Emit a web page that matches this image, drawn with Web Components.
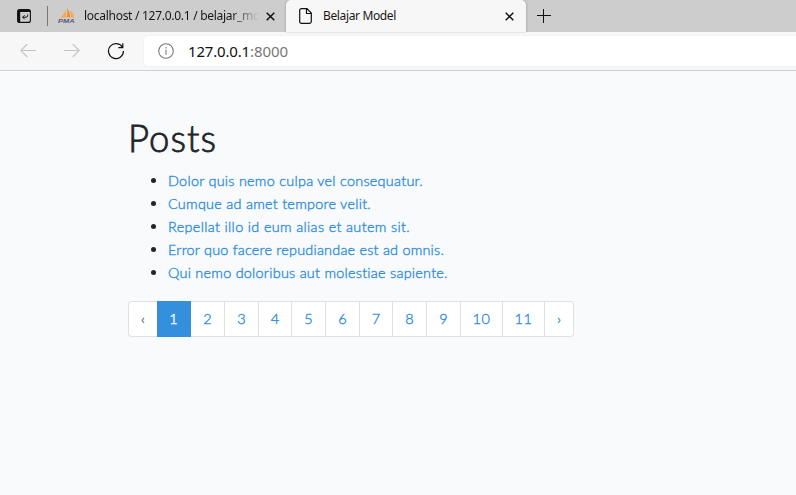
<!DOCTYPE html>
<html lang="en">
<head>
<meta charset="utf-8">
<title>Belajar Model</title>
<style>
html,body{margin:0;height:100%;overflow:hidden}
</style>
</head>
<body>
<browser-window></browser-window>
<script>
const define = (name, html) => customElements.define(name, class extends HTMLElement {
  connectedCallback() {
    if (!this.shadowRoot) {
      const t = document.createElement('template');
      t.innerHTML = html;
      this.attachShadow({ mode: 'open' }).append(t.content.cloneNode(true));
    }
  }
});

// Text tracked so that its line has the length given in the "length" attribute.
customElements.define('tracked-text', class extends HTMLElement {
  connectedCallback() {
    if (this.shadowRoot) return;
    this.attachShadow({ mode: 'open' }).innerHTML =
      '<style>:host{display:inline-block;white-space:nowrap}span{display:inline-block}</style><span><slot></slot></span>';
    const span = this.shadowRoot.querySelector('span');
    const target = +this.getAttribute('length');
    const extra = (target - span.getBoundingClientRect().width) / this.textContent.length;
    span.style.letterSpacing = extra.toFixed(3) + 'px';
  }
});

define('close-icon', `<style>:host{display:block;width:9px;height:9px}svg{display:block}</style>
<svg width="9" height="9" viewBox="0 0 9 9"><path d="M.7.7l7.6 7.6M8.3.7L.7 8.3" stroke="#111" stroke-width="1.5"/></svg>`);

define('tab-actions', `<style>:host{display:flex;width:48px;height:32px;box-sizing:border-box;align-items:center;padding-left:17px}
i{width:1px;height:20px;background:#777;margin-left:16px}</style>
<svg width="14" height="14" viewBox="0 0 14 14"><rect x=".6" y=".6" width="12.800" height="12.800" rx="2" fill="none" stroke="#111" stroke-width="1.100"/><path d="M1 1h12v2H3.200V13H1z" fill="#111"/><path d="M10.600 5.500v1.200q0 1.500-1.500 1.500H5.800M7.600 6.200L5.600 8.200l2 2" fill="none" stroke="#111"/></svg><i></i>`);

define('pma-logo', `<style>:host{display:block;width:18px;height:16px}svg{display:block}text{font:italic bold 6.2px "Liberation Sans",sans-serif}</style>
<svg width="18" height="16" viewBox="0 0 18 16"><path d="M8 .5C7.8 4 5 7.500 2 9.800q3-.8 6-.4z" fill="#f9a64a"/><path d="M9 .2q3.500 4.500 3 9.200-1.700-.7-3.200-.2Q10 5 9 .2z" fill="#f58b1c"/><path d="M12 2.500q4 3 4.200 7.500-1.800-.8-3.600-.6Q13.200 6 12 2.500z" fill="#f9a64a"/><text x="0" y="15.300" textLength="16.500" lengthAdjust="spacingAndGlyphs" fill="#555879">PMA</text></svg>`);

define('browser-tab', `<style>
:host{display:flex;position:relative;box-sizing:border-box;align-items:center;height:32px;font:12px/16px "Noto Sans","Open Sans",sans-serif;color:#171717}
:host([active]){background:#f7f7f7;border-radius:5px 5px 0 0;box-shadow:1px 0 2px #0002,-1px 0 2px #0002}
.title{overflow:hidden;white-space:nowrap;flex:none}
:host(:not([active])) .title{-webkit-mask-image:linear-gradient(90deg,#000 84%,transparent)}
</style><slot name="icon"></slot><div class="title" style="width:var(--title-width);margin-left:var(--title-gap)"><slot></slot></div><close-icon style="margin-left:var(--close-gap)"></close-icon>`);

define('tab-strip', `<style>:host{display:flex;height:32px;background:#cdcdcd}
.a{width:238px;padding-left:10px;--title-width:175px;--title-gap:8px;--close-gap:7px}
.b{width:240px;padding-left:13px;--title-width:80px;--title-gap:11px;--close-gap:102px}
.plus{margin:9px 0 0 11px}
</style>
<tab-actions></tab-actions>
<browser-tab class="a"><pma-logo slot="icon"></pma-logo><tracked-text length="183">localhost / 127.0.0.1 / belajar_mod</tracked-text></browser-tab>
<browser-tab class="b" active><svg slot="icon" width="13" height="16" viewBox="0 0 13 16"><path d="M2.500.7H8l4.300 4.300v8.500q0 1.800-1.800 1.800h-8Q.7 15.300.7 13.500v-11Q.7.7 2.500.7zM7.500.7V5.500h4.800" fill="none" stroke="#111" stroke-width="1.200"/></svg><tracked-text length="73">Belajar Model</tracked-text></browser-tab>
<svg class="plus" width="14" height="14" viewBox="0 0 14 14"><path d="M6.500 0v14M0 6.500h14" stroke="#111"/></svg>`);

define('address-bar', `<style>
:host{display:flex;align-items:center;flex:1;height:30px;margin:0 0 0 19px;background:#fff;border-radius:4px 0 0 4px;box-sizing:border-box;padding-left:14px;box-shadow:0 0 2px #0001;font:15px/20px "Noto Sans","Open Sans",sans-serif;color:#111}
div{margin-left:14px;display:flex}span{color:#777}
</style><svg width="16" height="16" viewBox="0 0 16 16"><circle cx="8" cy="8" r="7.300" fill="none" stroke="#777" stroke-width="1.100"/><path d="M8 6.800v5M8 4v1.500" stroke="#777" stroke-width="1.100"/></svg>
<div><tracked-text length="62">127.0.0.1</tracked-text><span><tracked-text length="38">:8000</tracked-text></span></div>`);

define('tool-bar', `<style>:host{display:flex;box-sizing:border-box;height:39px;background:#f7f7f7;border-bottom:1px solid #d1d1d4;align-items:center;padding-left:20px}
svg{flex:none}.f{margin-left:28px}.r{margin-left:27px}</style>
<svg width="16" height="14" viewBox="0 0 16 14"><path d="M16 6.500H.8M7.300 0L.8 6.500l6.500 6.500" fill="none" stroke="#c4c4c4" stroke-width="1.100"/></svg>
<svg class="f" width="16" height="14" viewBox="0 0 16 14"><path d="M0 6.500h15.200M8.700 0L15.200 6.500l-6.500 6.500" fill="none" stroke="#c4c4c4" stroke-width="1.100"/></svg>
<svg class="r" width="18" height="18" viewBox="0 0 18 18"><path d="M15.600 5.500A7.500 7.500 0 1 0 16.500 9M15.800 1.200v4.500h-4.500" fill="none" stroke="#111" stroke-width="1.200"/></svg>
<address-bar></address-bar>`);

define('post-item', `<style>:host{display:flex;align-items:center;height:23px;font:300 14.400px/23px Lato,sans-serif;color:#3490dc;-webkit-text-stroke:.4px #3490dc}
i{width:5px;height:5px;border-radius:50%;background:#212529;margin:0 12px 0 23px}</style><i></i><slot></slot>`);

define('page-link', `<style>:host{display:flex;box-sizing:border-box;height:36px;align-items:center;justify-content:center;border:1px solid #dee2e6;border-left-width:0;background:#fff;color:#3490dc;font:300 14.500px/20px Lato,sans-serif;-webkit-text-stroke:.4px currentColor}
:host([first]){border-left-width:1px;border-right:0;border-radius:4px 0 0 4px;color:#6c757d}
:host([last]){border-radius:0 4px 4px 0}
:host([active]){background:#3490dc;border-color:#3490dc;color:#fff}</style><slot></slot>`);

define('page-list', `<style>:host{display:grid;grid-template-columns:29px 34px 34px 34px 33px 34px 34px 33px 34px 34px 42px 42px 29px;width:446px;margin-top:17px}</style>
<page-link first>‹</page-link><page-link active>1</page-link>${[2,3,4,5,6,7,8,9].map(n => `<page-link>${n}</page-link>`).join('')}<page-link><tracked-text length="18">10</tracked-text></page-link><page-link><tracked-text length="18">11</tracked-text></page-link><page-link last>›</page-link>`);

define('posts-page', `<style>:host{display:block;flex:1;background:#f8fafc;padding:45px 0 0 128px}
h1{margin:0 0 9px;font:300 36.500px/44px Lato,sans-serif;color:#212529;-webkit-text-stroke:.8px #212529}</style>
<h1><tracked-text length="89">Posts</tracked-text></h1>
${[['Dolor quis nemo culpa vel consequatur.',255],['Cumque ad amet tempore velit.',203],['Repellat illo id eum alias et autem sit.',242],['Error quo facere repudiandae est ad omnis.',276],['Qui nemo doloribus aut molestiae sapiente.',280]].map(([t,w]) => `<post-item><tracked-text length="${w}">${t}</tracked-text></post-item>`).join('')}
<page-list></page-list>`);

define('browser-window', `<style>:host{display:flex;flex-direction:column;height:495px;width:796px;overflow:hidden}</style><tab-strip></tab-strip><tool-bar></tool-bar><posts-page></posts-page>`);
</script>
</body>
</html>
